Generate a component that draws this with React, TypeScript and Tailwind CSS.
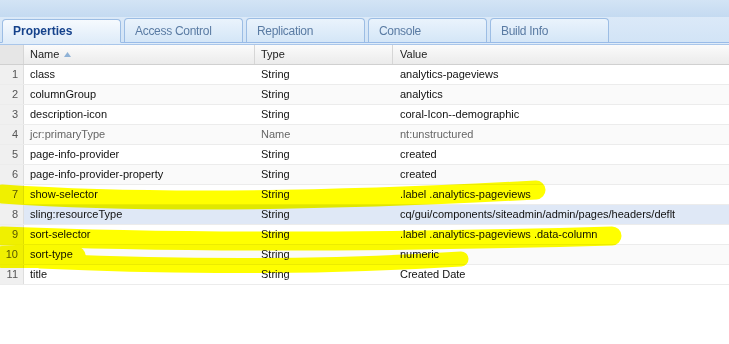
import React from 'react';

const tabs = ['Properties', 'Access Control', 'Replication', 'Console', 'Build Info'];

const rows = [
  { name: 'class', type: 'String', value: 'analytics-pageviews' },
  { name: 'columnGroup', type: 'String', value: 'analytics' },
  { name: 'description-icon', type: 'String', value: 'coral-Icon--demographic' },
  { name: 'jcr:primaryType', type: 'Name', value: 'nt:unstructured', muted: true },
  { name: 'page-info-provider', type: 'String', value: 'created' },
  { name: 'page-info-provider-property', type: 'String', value: 'created' },
  { name: 'show-selector', type: 'String', value: '.label .analytics-pageviews' },
  { name: 'sling:resourceType', type: 'String', value: 'cq/gui/components/siteadmin/admin/pages/headers/deflt', selected: true },
  { name: 'sort-selector', type: 'String', value: '.label .analytics-pageviews .data-column' },
  { name: 'sort-type', type: 'String', value: 'numeric' },
  { name: 'title', type: 'String', value: 'Created Date' },
];

export default function App() {
  return (
    <div className="relative w-[729px] h-[344px] overflow-hidden bg-white font-['Liberation_Sans',Arial,sans-serif]">
      {/* top strip */}
      <div className="h-[17px] bg-gradient-to-b from-[#d3e4f5] to-[#c4daf1]" />

      {/* tab bar */}
      <div className="h-[26px] bg-gradient-to-b from-[#dbe9f8] to-[#d2e4f6] border-b border-[#99bbe8] flex items-end pl-[2px] gap-[3px]">
        {tabs.map((t, i) => (
          <div
            key={t}
            className={`w-[119px] h-[24px] rounded-t-[4px] border border-[#9cbde4] px-[10px] flex items-center text-[12px] ${
              i === 0
                ? 'bg-gradient-to-b from-[#f6fafe] to-[#dfecf9] border-b-[#dfecf9] -mb-px font-bold text-[#15428b]'
                : 'bg-gradient-to-b from-[#eaf3fc] to-[#d4e6f7] border-b-0 text-[#5a7ba3] tracking-[-0.3px]'
            }`}
          >
            {t}
          </div>
        ))}
      </div>
      <div className="h-[2px] bg-[#dfecf9] border-b border-[#a9c6ea]" />

      {/* header */}
      <div className="flex h-[20px] bg-gradient-to-b from-[#fbfbfb] to-[#ebebeb] border-b border-[#d0d0d0] text-[11px] text-[#222]">
        <div className="w-[24px] bg-[#e6e6e6] border-r border-[#d6d6d6]" />
        <div className="w-[231px] pl-[6px] flex items-center gap-[5px] border-r border-[#d6d6d6]">
          Name
          <svg width="7" height="5" viewBox="0 0 7 5"><path d="M0 5 L3.5 0 L7 5 Z" fill="#8fb2d6" /></svg>
        </div>
        <div className="w-[138px] pl-[6px] flex items-center border-r border-[#d6d6d6]">Type</div>
        <div className="flex-1 pl-[7px] flex items-center">Value</div>
      </div>

      {/* rows */}
      <div className="text-[11px]">
        {rows.map((r, i) => (
          <div
            key={r.name}
            className={`flex h-[20px] border-b border-[#ececec] ${
              r.selected ? 'bg-[#dfe8f6]' : i % 2 === 1 ? 'bg-[#fafafa]' : 'bg-white'
            }`}
          >
            <div className="w-[24px] bg-[#f0f0f0] border-r border-[#dedede] flex items-center justify-end pr-[5px] text-[#555]">
              {i + 1}
            </div>
            <div className={`w-[231px] pl-[6px] flex items-center ${r.muted ? 'text-[#666]' : 'text-[#111]'}`}>{r.name}</div>
            <div className={`w-[138px] pl-[6px] flex items-center ${r.muted ? 'text-[#666]' : 'text-[#111]'}`}>{r.type}</div>
            <div className={`flex-1 pl-[7px] flex items-center whitespace-nowrap ${r.muted ? 'text-[#666]' : 'text-[#111]'}`}>{r.value}</div>
          </div>
        ))}
      </div>

      {/* highlighter strokes */}
      <svg className="absolute left-0 top-0 pointer-events-none mix-blend-multiply" width="729" height="344" viewBox="0 0 729 344">
        <g fill="none" stroke="#ffff00" strokeLinecap="round" strokeLinejoin="round">
          <path d="M2 194 C 150 204, 350 200, 536 190" strokeWidth="19" />
          <path d="M2 236 C 200 244, 400 242, 612 236" strokeWidth="19" />
          <path d="M2 257 L 75 257" strokeWidth="22" />
          <path d="M40 261 C 200 268, 350 266, 461 259" strokeWidth="15" />
        </g>
      </svg>
    </div>
  );
}
